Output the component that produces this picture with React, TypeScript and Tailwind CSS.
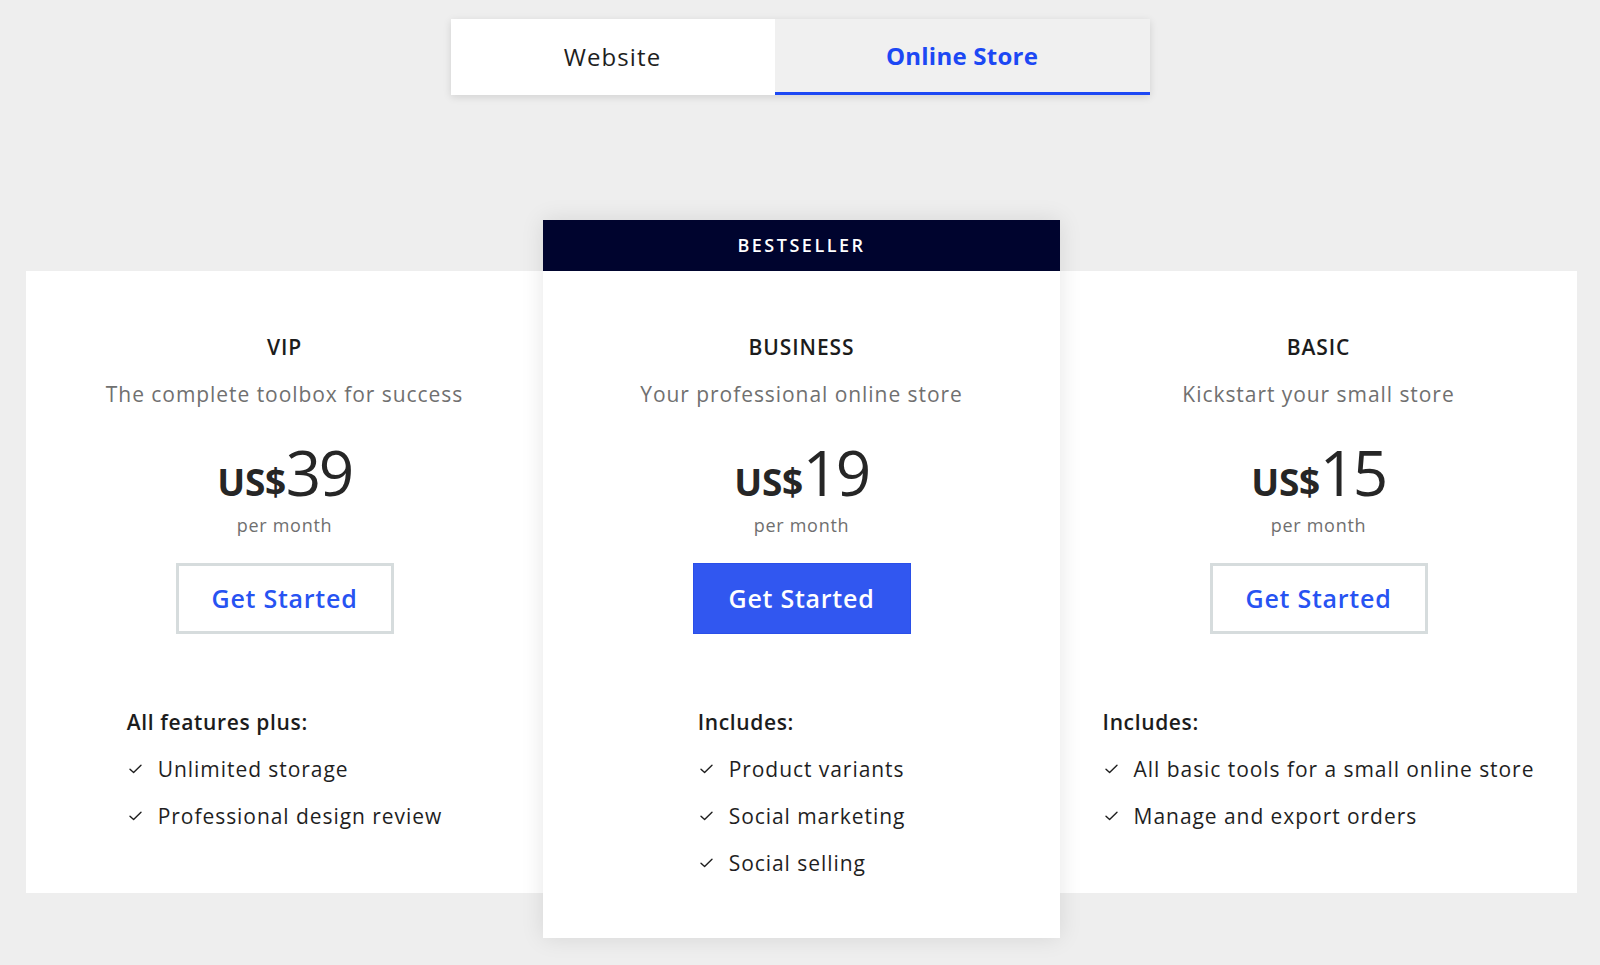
import React from "react";

type Plan = {
  name: string;
  subtitle: string;
  price: string;
  featuresTitle: string;
  features: string[];
  highlighted?: boolean;
};

const plans: Plan[] = [
  {
    name: "VIP",
    subtitle: "The complete toolbox for success",
    price: "39",
    featuresTitle: "All features plus:",
    features: ["Unlimited storage", "Professional design review"],
  },
  {
    name: "BUSINESS",
    subtitle: "Your professional online store",
    price: "19",
    featuresTitle: "Includes:",
    features: ["Product variants", "Social marketing", "Social selling"],
    highlighted: true,
  },
  {
    name: "BASIC",
    subtitle: "Kickstart your small store",
    price: "15",
    featuresTitle: "Includes:",
    features: ["All basic tools for a small online store", "Manage and export orders"],
  },
];

function Check() {
  return (
    <svg width="13" height="10" viewBox="0 0 13 10" fill="none" className="shrink-0">
      <path d="M1 5.2 L4.6 8.6 L12 1.2" stroke="#1f1f1f" strokeWidth="1.4" strokeLinecap="round" strokeLinejoin="round" />
    </svg>
  );
}

function PlanBody({ plan }: { plan: Plan }) {
  return (
    <div className={plan.highlighted ? "flex flex-col items-center pt-[62px] pb-[61px]" : "flex flex-col items-center pt-[62px] pb-[63px]"}>
      <div className="text-[21px] leading-[28px] font-semibold text-[#1c1c1c] tracking-[0.045em]">{plan.name}</div>
      <div className="mt-[19px] text-[21px] leading-[28px] text-[#707070] tracking-[0.045em]">{plan.subtitle}</div>
      <div className="mt-[32px] h-[64px] flex items-baseline leading-[64px] text-[#262626]">
        <span className="text-[37px] font-bold tracking-[-0.01em]">US$</span>
        <span className="text-[62px] tracking-[-0.04em]">{plan.price}</span>
      </div>
      <div className="mt-[9px] text-[18px] leading-[24px] text-[#6f6f6f] tracking-[0.04em]">per month</div>
      <button
        className={
          plan.highlighted
            ? "mt-[26px] w-[218px] h-[71px] bg-[#3157f0] border-[1px] border-[#2a4fe8] text-white text-[25px] font-semibold tracking-[0.03em]"
            : "mt-[26px] w-[218px] h-[71px] bg-white border-[3px] border-[#d6dcdd] text-[#2753f2] text-[25px] font-semibold tracking-[0.03em]"
        }
      >
        Get Started
      </button>
      <div className="mt-[74px] flex flex-col items-start">
        <div className="text-[21px] leading-[28px] font-semibold text-[#1c1c1c] tracking-[0.03em]">{plan.featuresTitle}</div>
        <ul className="mt-[19px] flex flex-col gap-[19px]">
          {plan.features.map((f) => (
            <li key={f} className="flex items-center gap-[16px] pl-[2px] text-[21px] leading-[28px] text-[#1f1f1f] tracking-[0.045em]">
              <Check />
              <span>{f}</span>
            </li>
          ))}
        </ul>
      </div>
    </div>
  );
}

export default function App() {
  return (
    <div
      className="w-full h-[965px] overflow-hidden bg-[#eeeeee] flex flex-col items-center"
      style={{ fontFamily: '"Open Sans", "Liberation Sans", sans-serif' }}
    >
      <div className="mt-[19px] flex h-[76px] shadow-[0_2px_8px_rgba(0,0,0,0.12)]">
        <div className="w-[324px] h-full bg-white flex items-center justify-center text-[24px] text-[#1e1e1e] tracking-[0.045em]">
          Website
        </div>
        <div className="w-[375px] h-full bg-[#f0f0f0] flex items-center justify-center text-[24px] font-bold text-[#1c48f4] border-b-[3px] border-[#1c48f4] tracking-[0.01em]">
          Online Store
        </div>
      </div>

      <div className="mt-[125px] ml-[3px] w-[1551px] grid grid-cols-3 items-start">
        {plans.map((plan) =>
          plan.highlighted ? (
            <div key={plan.name} className="relative z-10 bg-white shadow-[0_0_22px_rgba(0,0,0,0.1)]">
              <div className="h-[51px] bg-[#00042e] flex items-center justify-center text-white text-[18px] font-semibold tracking-[0.14em]">
                BESTSELLER
              </div>
              <PlanBody plan={plan} />
            </div>
          ) : (
            <div key={plan.name} className="mt-[51px] bg-white">
              <PlanBody plan={plan} />
            </div>
          )
        )}
      </div>
    </div>
  );
}
